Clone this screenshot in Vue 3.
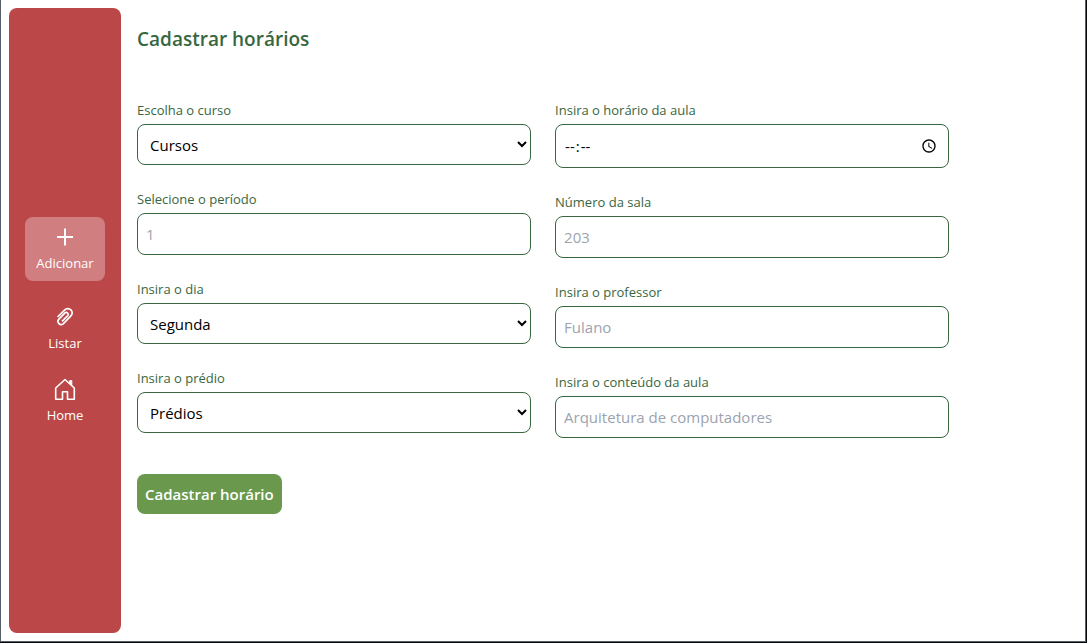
<script setup>
import { reactive } from 'vue'

const form = reactive({
  curso: 'Cursos',
  periodo: '',
  dia: 'Segunda',
  predio: 'Prédios',
  horario: '',
  sala: '',
  professor: '',
  conteudo: '',
})

const dias = ['Segunda', 'Terça', 'Quarta', 'Quinta', 'Sexta']
</script>

<template>
  <div class="desktop">
    <div class="window">
      <nav class="sidebar">
        <a class="item active" href="#adicionar">
          <svg viewBox="0 0 24 24" fill="none" stroke="currentColor" stroke-width="2">
            <path d="M12 3.5v17M4 12h16" />
          </svg>
          <span>Adicionar</span>
        </a>
        <a class="item" href="#listar">
          <svg viewBox="0 0 24 24" fill="none" stroke="currentColor" stroke-width="1.7" stroke-linejoin="round">
            <path d="M4.6 12l7.2-7.2a4.3 4.3 0 0 1 6.1 6.1l-7.7 7.9a3.2 3.2 0 0 1-4.5-4.5l6.3-6.5a2 2 0 0 1 2.8 2.8L9 16.4" />
          </svg>
          <span>Listar</span>
        </a>
        <a class="item" href="#home">
          <svg viewBox="0 0 24 24" fill="none" stroke="currentColor" stroke-width="1.6" stroke-linejoin="round">
            <path d="M2.7 11v11.3h6.8v-7.5h5v7.5h6.8V11L12 2.5z" />
            <path d="M16.2 6.2l2.6 2.4V3.6h-2z" fill="currentColor" stroke-width="1" />
          </svg>
          <span>Home</span>
        </a>
      </nav>

      <main class="content">
        <h1>Cadastrar horários</h1>
        <form @submit.prevent>
          <div class="columns">
            <div class="column">
              <div class="field">
                <label for="curso">Escolha o curso</label>
                <select id="curso" v-model="form.curso">
                  <option>Cursos</option>
                </select>
              </div>
              <div class="field">
                <label for="periodo">Selecione o período</label>
                <input id="periodo" v-model="form.periodo" type="text" placeholder="1" />
              </div>
              <div class="field">
                <label for="dia">Insira o dia</label>
                <select id="dia" v-model="form.dia">
                  <option v-for="dia in dias" :key="dia">{{ dia }}</option>
                </select>
              </div>
              <div class="field">
                <label for="predio">Insira o prédio</label>
                <select id="predio" v-model="form.predio">
                  <option>Prédios</option>
                </select>
              </div>
            </div>
            <div class="column">
              <div class="field">
                <label for="horario">Insira o horário da aula</label>
                <input id="horario" v-model="form.horario" class="time" type="time" />
              </div>
              <div class="field">
                <label for="sala">Número da sala</label>
                <input id="sala" v-model="form.sala" type="text" placeholder="203" />
              </div>
              <div class="field">
                <label for="professor">Insira o professor</label>
                <input id="professor" v-model="form.professor" type="text" placeholder="Fulano" />
              </div>
              <div class="field">
                <label for="conteudo">Insira o conteúdo da aula</label>
                <input id="conteudo" v-model="form.conteudo" type="text" placeholder="Arquitetura de computadores" />
              </div>
            </div>
          </div>
          <button type="submit">Cadastrar horário</button>
        </form>
      </main>
    </div>
  </div>
</template>

<style>
body {
  margin: 0;
}
</style>

<style scoped>
.desktop,
.desktop * {
  box-sizing: border-box;
}

.desktop {
  display: flex;
  min-height: 100vh;
  padding: 0 1px 1px 0;
  background: #05070d;
  font-family: "Segoe UI", "Open Sans", "Noto Sans", sans-serif;
}

.window {
  display: flex;
  flex: 1;
  gap: 16px;
  padding: 8px;
  background: #fff;
  border: 1px solid #565e69;
  border-top: 0;
}

.sidebar {
  display: flex;
  flex: none;
  flex-direction: column;
  justify-content: center;
  gap: 24px;
  width: 112px;
  padding: 0 16px;
  background: #bc4749;
  border-radius: 8px;
}

.item {
  display: flex;
  flex-direction: column;
  align-items: center;
  gap: 4px;
  color: #fff;
  font-size: 13px;
  font-weight: 500;
  line-height: 20px;
  text-decoration: none;
}

.item svg {
  width: 24px;
  height: 24px;
}

.item.active {
  padding: 8px 0;
  background: rgba(255, 255, 255, 0.3);
  border-radius: 8px;
}

.content {
  flex: 1;
  padding-top: 16px;
}

h1 {
  margin: 0 0 46px;
  color: #386641;
  font-size: 19px;
  font-weight: 600;
  line-height: 30px;
}

.columns {
  display: grid;
  grid-template-columns: 1fr 1fr;
  gap: 24px;
  width: 86.4%;
}

.column {
  display: flex;
  flex-direction: column;
  gap: 24px;
}

.field {
  display: flex;
  flex-direction: column;
  gap: 4px;
}

label {
  color: #386641;
  font-size: 13px;
  line-height: 20px;
}

select,
input {
  width: 100%;
  height: 42px;
  margin: 0;
  padding: 8px;
  background: #fff;
  border: 1px solid #386641;
  border-radius: 8px;
  color: #000;
  font-family: inherit;
  font-size: 15px;
  line-height: 24px;
}

select {
  height: 41px;
}

input.time {
  height: 44px;
}

input.time::-webkit-datetime-edit-ampm-field {
  display: none;
}

input::placeholder {
  color: #9ca3af;
  opacity: 1;
}

button {
  height: 40px;
  margin-top: 36px;
  padding: 0 8px;
  background: #6a994e;
  border: 0;
  border-radius: 8px;
  color: #fff;
  font-family: inherit;
  font-size: 15px;
  font-weight: 600;
  line-height: 24px;
}
</style>
